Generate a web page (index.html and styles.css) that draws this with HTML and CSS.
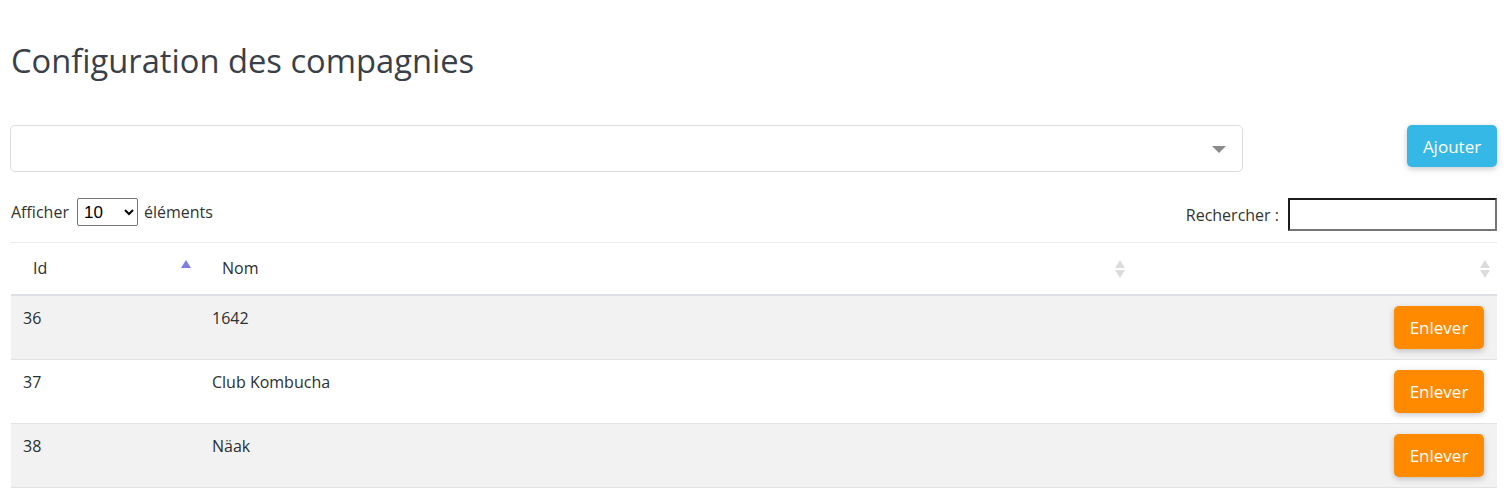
FILE: index.html
```html
<!DOCTYPE html>
<html lang="fr">
<head>
<meta charset="utf-8">
<title>Configuration des compagnies</title>
<link rel="stylesheet" href="styles.css">
</head>
<body>
<div class="page">
  <h1 class="title">Configuration des compagnies</h1>

  <div class="toolbar">
    <div class="select2">
      <span class="select2-arrow"></span>
    </div>
    <button class="btn btn-info">Ajouter</button>
  </div>

  <div class="controls">
    <label class="length">Afficher
      <select class="length-select">
        <option>10</option>
        <option>25</option>
        <option>50</option>
        <option>100</option>
      </select>
      éléments</label>
    <label class="search">Rechercher :
      <input class="search-input" type="search">
    </label>
  </div>

  <table class="grid">
    <thead>
      <tr>
        <th class="col-id sorted">Id<span class="sort sort-asc"></span></th>
        <th class="col-name">Nom<span class="sort sort-both"></span></th>
        <th class="col-act"><span class="sort sort-both"></span></th>
      </tr>
    </thead>
    <tbody>
      <tr class="odd">
        <td class="cell-id">36</td>
        <td class="cell-name">1642</td>
        <td class="cell-act"><button class="btn btn-warn">Enlever</button></td>
      </tr>
      <tr class="even">
        <td class="cell-id">37</td>
        <td class="cell-name">Club Kombucha</td>
        <td class="cell-act"><button class="btn btn-warn">Enlever</button></td>
      </tr>
      <tr class="odd">
        <td class="cell-id">38</td>
        <td class="cell-name">Näak</td>
        <td class="cell-act"><button class="btn btn-warn">Enlever</button></td>
      </tr>
    </tbody>
  </table>
</div>
</body>
</html>
```

FILE: styles.css
```css
* { box-sizing: border-box; }

html, body {
  margin: 0;
  background: #ffffff;
}

body {
  font-family: "Open Sans", "Lato", "Liberation Sans", sans-serif;
  font-size: 16px;
  color: #2b2f33;
  overflow: hidden;
}

.page {
  padding: 0 10px 0 10px;
}

.title {
  margin: 38px 0 0 1px;
  font-size: 32.7px;
  font-weight: 400;
  line-height: 46px;
  color: #3a3f48;
}

.toolbar {
  display: flex;
  align-items: flex-start;
  justify-content: space-between;
  margin-top: 41px;
}

.select2 {
  position: relative;
  width: 1233px;
  height: 47px;
  border: 1px solid #dcdcdc;
  border-radius: 5px;
  background: #fff;
}

.select2-arrow {
  position: absolute;
  right: 16px;
  top: 20px;
  width: 0;
  height: 0;
  border-left: 7px solid transparent;
  border-right: 7px solid transparent;
  border-top: 7px solid #8a8a8a;
}

.btn {
  font-family: inherit;
  font-size: 17px;
  color: #fff;
  border: 0;
  border-radius: 5px;
  cursor: pointer;
  box-shadow: 0 2px 6px rgba(0, 0, 0, 0.22);
}

.btn-info {
  width: 90px;
  height: 42px;
  background: #36b8e6;
}

.btn-warn {
  width: 90px;
  height: 43px;
  background: #ff8a00;
}

.controls {
  display: flex;
  justify-content: space-between;
  align-items: flex-start;
  margin-top: 26px;
  padding-left: 1px;
}

.length {
  display: flex;
  align-items: center;
  gap: 6px;
  height: 28px;
  font-size: 16px;
  color: #333;
}

.length-select {
  width: 61px;
  height: 28px;
  margin-left: 2px;
  font-family: "Liberation Sans", sans-serif;
  font-size: 17px;
  border: 1px solid #767676;
  border-radius: 2px;
  background: #fff;
  color: #000;
  padding: 0 2px;
}

.search {
  display: flex;
  align-items: center;
  gap: 9px;
  font-size: 16px;
  color: #333;
}

.search-input {
  width: 209px;
  height: 33px;
  border: 2px solid;
  border-color: #1c1c1c #767676 #767676 #1c1c1c;
  background: #fff;
  padding: 0 4px;
}

.grid {
  width: 1486px;
  margin: 11px 0 0 1px;
  border-collapse: collapse;
  border-top: 1px solid #e6e9ed;
}

.grid th {
  position: relative;
  text-align: left;
  font-weight: 400;
  font-size: 16px;
  color: #2b2f33;
  height: 52px;
  padding: 0 10px 0 22px;
  border-bottom: 2px solid #dde1e5;
}

.col-id { width: 189px; }
.col-name { width: 930px; }

.sort {
  position: absolute;
  right: 9px;
  top: 17px;
  width: 10px;
  height: 18px;
}

.sort-asc::before {
  content: "";
  position: absolute;
  left: 0;
  top: 0;
  border-left: 5px solid transparent;
  border-right: 5px solid transparent;
  border-bottom: 8px solid #7d7fdc;
}

.sort-both::before,
.sort-both::after {
  content: "";
  position: absolute;
  left: 0;
  border-left: 5px solid transparent;
  border-right: 5px solid transparent;
}

.sort-both::before {
  top: 0;
  border-bottom: 8px solid #dcdcdc;
}

.sort-both::after {
  top: 10px;
  border-top: 8px solid #dcdcdc;
}

.col-name .sort { right: 5px; }
.col-act .sort { right: 7px; }

.grid td {
  vertical-align: top;
  padding: 10px 12px;
  height: 64px;
  line-height: 24px;
  border-bottom: 1px solid #e2e2e2;
  color: #2b2f33;
}

.grid tr.odd td { background: #f2f2f2; }
.grid tr.even td { background: #ffffff; }

.grid td.cell-act {
  text-align: right;
  padding-right: 13px;
}
```
